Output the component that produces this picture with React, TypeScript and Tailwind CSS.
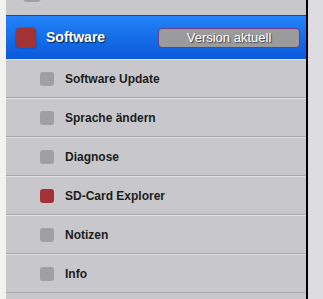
const items = [
  { label: 'Software Update', red: false },
  { label: 'Sprache ändern', red: false },
  { label: 'Diagnose', red: false },
  { label: 'SD-Card Explorer', red: true },
  { label: 'Notizen', red: false },
  { label: 'Info', red: false },
];

export default function App() {
  return (
    <div className="flex h-[299px] w-[323px] overflow-hidden bg-[#dcdce1] font-['Liberation_Sans',Arial,sans-serif]">
      <div className="w-[6px] shrink-0 bg-[#f2f2f2]" />
      <div className="flex w-[302px] shrink-0 flex-col border-r-2 border-black bg-[#c8c8cc]">
        {/* row above, cut off */}
        <div className="relative h-[15px] shrink-0">
          <div className="absolute left-[17px] top-[-12px] h-[14px] w-[18px] rounded-[4px] bg-[#a0a0a0]" />
        </div>
        {/* active section header */}
        <div className="flex h-[44px] shrink-0 items-center border-t border-[#0b4db8] bg-gradient-to-b from-[#2383f7] to-[#0a58da] pl-[10px] pr-[6px]">
          <div className="h-[20px] w-[20px] rounded-[4px] bg-[#a33234] shadow-[0_0_2px_rgba(0,0,0,0.4)]" />
          <span className="ml-[10px] text-[14px] font-bold text-white [text-shadow:1px_1px_1px_rgba(0,0,0,0.7)]">
            Software
          </span>
          <div className="ml-auto flex h-[20px] w-[142px] items-center justify-center rounded-[4px] border border-[#6b3a8a] bg-[#9b9b9d] text-[13px] text-white [text-shadow:1px_1px_1px_rgba(0,0,0,0.6)]">
            Version aktuell
          </div>
        </div>
        {items.map((it) => (
          <div
            key={it.label}
            className="flex h-[39px] shrink-0 items-center border-t border-[#e2e2e5] border-b border-b-[#a8a8ac] pl-[34px]"
          >
            <div
              className={
                it.red
                  ? 'h-[14px] w-[14px] rounded-[3px] bg-[#a33234]'
                  : 'h-[14px] w-[14px] rounded-[3px] bg-[#a0a0a2]'
              }
            />
            <span className="ml-[11px] text-[12px] font-bold text-[#1c1c1c]">{it.label}</span>
          </div>
        ))}
        <div className="h-[20px] shrink-0" />
      </div>
    </div>
  );
}
